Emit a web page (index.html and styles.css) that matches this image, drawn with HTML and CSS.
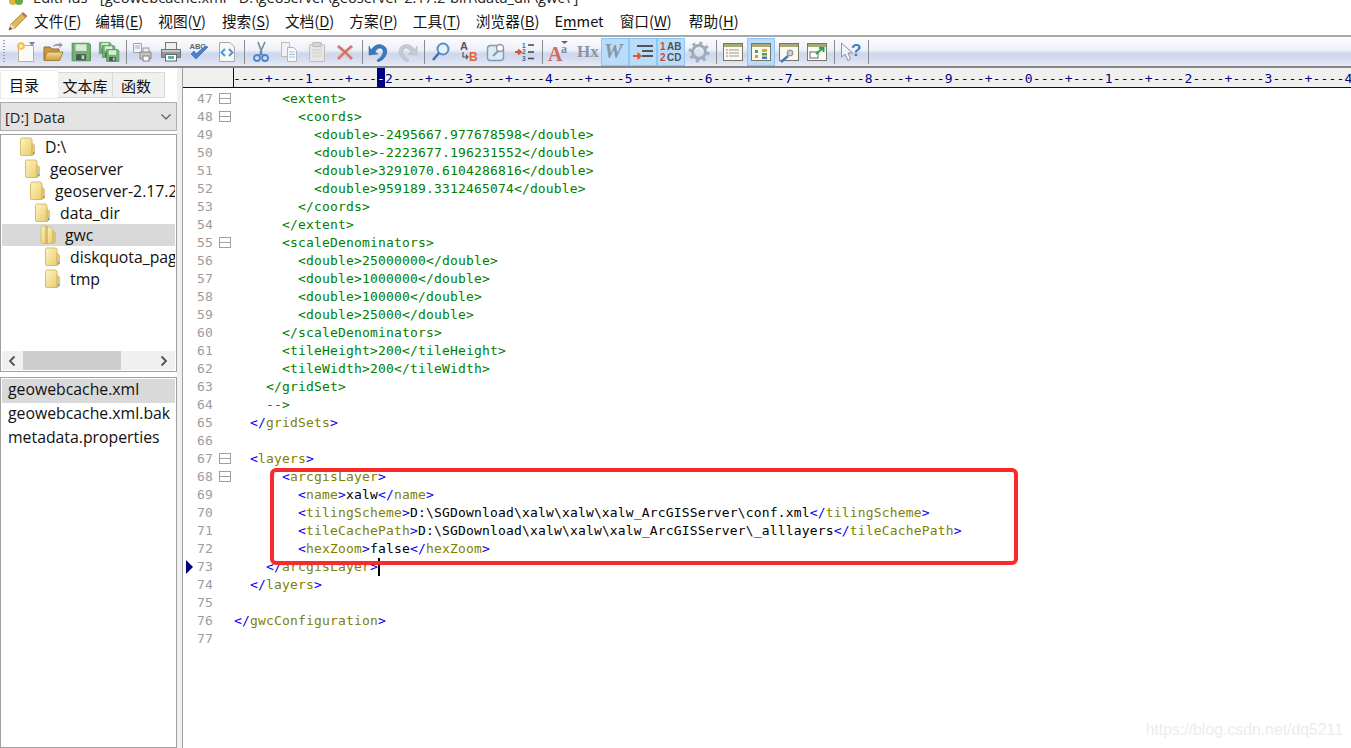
FILE: index.html
```html
<!DOCTYPE html>
<html lang="zh-CN">
<head>
<meta charset="utf-8">
<title>EditPlus</title>
<link rel="stylesheet" href="styles.css">
</head>
<body>
<svg class="defs" width="0" height="0" aria-hidden="true">
  <defs>
    <linearGradient id="fold" x1="0" y1="0" x2="1" y2="1">
      <stop offset="0" stop-color="#fdf5c4"/><stop offset="1" stop-color="#eacb6a"/>
    </linearGradient>
    <linearGradient id="gold" x1="0" y1="0" x2="0" y2="1">
      <stop offset="0" stop-color="#f6dc94"/><stop offset="1" stop-color="#cf9c3e"/>
    </linearGradient>
    <symbol id="folder" viewBox="0 0 17 20">
      <path d="M1.5 2.5Q1.5 1 3 1H11Q13 1 13 3V18.5H3Q1.5 18.5 1.5 17Z" fill="url(#fold)" stroke="#d8bb6d"/>
      <path d="M13 6L15.5 8V17L13 18.5Z" fill="#e4c878" stroke="#c9ab60" stroke-width=".6"/>
      <rect x="14" y="15" width="1.2" height="2" fill="#4aa4d8"/>
    </symbol>
    <symbol id="folder-open" viewBox="0 0 17 20">
      <path d="M1 2.5Q1 1 2.5 1H6V18.5H2.5Q1 18.5 1 17Z" fill="url(#fold)" stroke="#d8bb6d"/>
      <path d="M6 1L11 2.5Q13 3 13 5V18.5H6Z" fill="url(#fold)" stroke="#d8bb6d"/>
      <path d="M7 1V18.5" stroke="#b59a50"/>
      <path d="M13 6L15.5 8V17L13 18.5Z" fill="#e4c878" stroke="#c9ab60" stroke-width=".6"/>
    </symbol>
    <symbol id="floppy" viewBox="0 0 20 20">
      <path d="M2 2H17L18.500 3.500V18H2Z" fill="#6fb274" stroke="#5a9262"/>
      <rect x="5" y="3" width="10" height="6" fill="#dcead6"/>
      <rect x="5.500" y="12" width="9" height="5.500" fill="#4a584c"/>
      <rect x="10.500" y="13" width="2.500" height="3.500" fill="#c4cec4"/>
    </symbol>
    <symbol id="panel" viewBox="0 0 22 22">
      <rect x="1.500" y="2.500" width="19" height="17" fill="#fbfaf2" stroke="#77776a"/>
      <rect x="2" y="3" width="18" height="3" fill="#a9a878"/>
    </symbol>
  </defs>
</svg>

<div class="app">
  <div class="titlebar">
    <svg class="title-icon" viewBox="0 0 16 16" width="16" height="16"><circle cx="5" cy="6" r="4" fill="#d8b840"/><circle cx="11" cy="6" r="4" fill="#6aa84a"/></svg>
    <span class="title-text">EditPlus - [geowebcache.xml - D:\geoserver\geoserver-2.17.2-bin\data_dir\gwc\ ]</span>
  </div>

  <nav class="menubar">
    <svg class="pencil" viewBox="0 0 22 22" width="22" height="22">
      <path d="M2 20L4 14L16 2.500L20 6L8 18Z" fill="#e0b858" stroke="#96803e" stroke-width=".8"/>
      <path d="M16 2.500L20 6L18.500 7.500L14.500 4Z" fill="#cf6a5a"/>
      <path d="M2 20L4 14L8 18Z" fill="#f2dfb8"/>
      <path d="M2 20L3 17L5 19Z" fill="#333"/>
    </svg>
    <span class="menu m1">文件(<u>F</u>)</span>
    <span class="menu">编辑(<u>E</u>)</span>
    <span class="menu m3">视图(<u>V</u>)</span>
    <span class="menu">搜索(<u>S</u>)</span>
    <span class="menu">文档(<u>D</u>)</span>
    <span class="menu">方案(<u>P</u>)</span>
    <span class="menu">工具(<u>T</u>)</span>
    <span class="menu">浏览器(<u>B</u>)</span>
    <span class="menu m9">E<u>m</u>met</span>
    <span class="menu m10">窗口(<u>W</u>)</span>
    <span class="menu">帮助(<u>H</u>)</span>
  </nav>

  <div class="toolbar">
    <span class="grip"></span>
    <span class="tb"><svg viewBox="0 0 22 22">
      <path d="M4.500 4.500H19.500V20.500H4.500Z" fill="#fbfbf6" stroke="#b5b3a0"/>
      <path d="M15 1H21L18 5Z" fill="#7384a8"/>
      <circle cx="7" cy="5" r="3.800" fill="#f8b84a"/><circle cx="7" cy="5" r="2" fill="#ffeb9c"/>
    </svg></span>
    <span class="tb"><svg viewBox="0 0 22 22">
      <path d="M2 6H8L10 8H17V19H2Z" fill="#c89a45" stroke="#8d6c2e"/>
      <path d="M5 11H21L17.500 19.500H2Z" fill="url(#gold)" stroke="#a47f38"/>
      <path d="M10 6Q13 2 18 3L17 1L21 4L17 7L17.500 5Q14 4 10 6Z" fill="#8d9aa8"/>
    </svg></span>
    <span class="tb"><svg viewBox="0 0 20 20"><use href="#floppy"/></svg></span>
    <span class="tb"><svg viewBox="0 0 22 22">
      <use href="#floppy" x="0" y="0" width="14" height="14"/>
      <use href="#floppy" x="3" y="3" width="15" height="15"/>
      <use href="#floppy" x="7" y="7" width="15" height="15"/>
    </svg></span>
    <span class="sep"></span>
    <span class="tb"><svg viewBox="0 0 22 22">
      <path d="M1.500 2.500H9.500V11.500H1.500Z" fill="#f4f4f4" stroke="#a2a2a2"/>
      <path d="M3 5H8M3 7H8" stroke="#9ab0c8"/>
      <path d="M8 11H19V18H8Z" fill="#c4c4c4" stroke="#8a8a8a"/>
      <rect x="11" y="15" width="6" height="5" fill="#fff" stroke="#808080"/>
      <rect x="11" y="7" width="6" height="4" fill="#eee" stroke="#999"/>
    </svg></span>
    <span class="tb"><svg viewBox="0 0 22 22">
      <rect x="5.500" y="1.500" width="11" height="7" fill="#eee" stroke="#777"/>
      <path d="M1.500 8.500H20.500V16.500H1.500Z" fill="#8f959b" stroke="#6d7378"/>
      <rect x="2" y="9" width="18" height="2" fill="#c3c8cc"/>
      <rect x="5.500" y="13.500" width="11" height="6.500" fill="#fff" stroke="#666"/>
      <rect x="8" y="15" width="6" height="3" fill="#58b8a8"/>
    </svg></span>
    <span class="tb"><svg viewBox="0 0 22 22">
      <text x="1.500" y="8" class="abc">ABC</text>
      <path d="M3 13L8 18L20 6L17 5L8 13L6 10Z" fill="#4a80d0" stroke="#3562a0" stroke-width=".6"/>
    </svg></span>
    <span class="tb"><svg viewBox="0 0 22 22">
      <path d="M3.500 1.500H14L18.500 6V20.500H3.500Z" fill="#f8f8f4" stroke="#a8a89f"/>
      <path d="M9 8L5.500 11.500L9 15M13 8L16.500 11.500L13 15" fill="none" stroke="#4a98e4" stroke-width="2"/>
    </svg></span>
    <span class="sep"></span>
    <span class="tb"><svg viewBox="0 0 22 22">
      <path d="M8 1L12 12M15 1L10 12" stroke="#7a8898" stroke-width="1.600"/>
      <circle cx="7" cy="17" r="3" fill="none" stroke="#4a86cc" stroke-width="1.800"/>
      <circle cx="15" cy="17" r="3" fill="none" stroke="#4a86cc" stroke-width="1.800"/>
      <path d="M12 12L8.500 15M10 12L13.500 15" stroke="#4a86cc" stroke-width="1.600"/>
    </svg></span>
    <span class="tb"><svg viewBox="0 0 22 22">
      <path d="M3.500 1.500H11.500V15.500H3.500Z" fill="#f2f2f2" stroke="#bcbcbc"/>
      <path d="M9.500 6.500H15.500L18.500 9.500V20.500H9.500Z" fill="#f8f8f8" stroke="#b4b4b4"/>
      <path d="M11 11H17M11 13.500H17M11 16H17" stroke="#a2c2e2"/>
    </svg></span>
    <span class="tb"><svg viewBox="0 0 22 22">
      <rect x="3.500" y="3.500" width="15" height="17" rx="1" fill="#e6e6e6" stroke="#bcbcbc"/>
      <rect x="7" y="1.500" width="8" height="4" fill="#d8d8d8" stroke="#b8b8b8"/>
      <path d="M6 9H16M6 12H16M6 15H16" stroke="#d0d0d0"/>
    </svg></span>
    <span class="tb"><svg viewBox="0 0 22 22">
      <path d="M4 5L11 11L18 5M4 18L11 11L18 18" fill="none" stroke="#e0a8a4" stroke-width="3.600"/>
      <path d="M4 5L11 11L18 5M4 18L11 11L18 18" fill="none" stroke="#d06058" stroke-width="1.400"/>
    </svg></span>
    <span class="sep"></span>
    <span class="tb"><svg viewBox="0 0 22 22">
      <path d="M3 9Q8 2 14 4Q21 7 18 14Q16 19 10 21L9 19Q14 16 15 12Q16 8 12 7Q9 7 7 11L10 13L1 14L1 5L3 9Z" fill="#3a78bc" stroke="#2a5c98" stroke-width=".5"/>
    </svg></span>
    <span class="tb"><svg viewBox="0 0 22 22">
      <path d="M19 9Q14 2 8 4Q1 7 4 14Q6 19 12 21L13 19Q8 16 7 12Q6 8 10 7Q13 7 15 11L12 13L21 14L21 5L19 9Z" fill="#c5ccd0" stroke="#a9b2b8" stroke-width=".5"/>
    </svg></span>
    <span class="sep"></span>
    <span class="tb"><svg viewBox="0 0 22 22">
      <circle cx="13" cy="8" r="5.500" fill="#e4f0fa" stroke="#5a8cc4" stroke-width="2"/>
      <path d="M9 12L3 19" stroke="#3f74b0" stroke-width="2.600"/>
    </svg></span>
    <span class="tb"><svg viewBox="0 0 22 22">
      <text x="2" y="9" class="ab-a">A</text>
      <text x="11" y="20" class="ab-b">B</text>
      <path d="M5 11V16H9M8 14L10 16L8 18" fill="none" stroke="#555" stroke-width="1.200"/>
    </svg></span>
    <span class="tb"><svg viewBox="0 0 22 22">
      <rect x="1.500" y="4.500" width="16" height="15" rx="3" fill="#dce9f6" stroke="#7d9bbc" stroke-width="1.400"/>
      <circle cx="14" cy="7" r="3.500" fill="#fff" stroke="#8a98a6" stroke-width="1.400"/>
      <path d="M12 10L7 15" stroke="#8a98a6" stroke-width="2"/>
    </svg></span>
    <span class="tb"><svg viewBox="0 0 22 22">
      <path d="M1 11H6M4 8.500L7 11L4 13.500" fill="none" stroke="#d4552f" stroke-width="1.800"/>
      <text x="8" y="6.500" class="nums">1</text><text x="8" y="13" class="nums">2</text><text x="8" y="19.500" class="nums">3</text>
      <path d="M14 4H20M14 11H20M14 17.500H20" stroke="#444" stroke-width="1.600"/>
    </svg></span>
    <span class="sep"></span>
    <span class="tb"><svg viewBox="0 0 22 22">
      <text x="0" y="20" class="big-a">A</text>
      <text x="13" y="12" class="small-a">a</text>
      <path d="M13 0H20L16.500 3Z" fill="#5c6470"/>
    </svg></span>
    <span class="tb"><svg viewBox="0 0 22 22"><text x="1" y="16" class="hx">Hx</text></svg></span>
    <span class="tb on"><svg viewBox="0 0 22 22"><text x="0" y="17" class="w">W</text></svg></span>
    <span class="tb on"><svg viewBox="0 0 22 22">
      <path d="M5 5H21M10 10H21M10 15H21" stroke="#555" stroke-width="2"/>
      <path d="M1 15H8M5.500 12L8.500 15L5.500 18" fill="none" stroke="#e0562a" stroke-width="2"/>
    </svg></span>
    <span class="tb on"><svg viewBox="0 0 22 22">
      <text x="0" y="9" class="n-red">1</text><text x="7" y="9" class="n-grey">AB</text>
      <text x="0" y="20" class="n-red">2</text><text x="7" y="20" class="n-grey">CD</text>
    </svg></span>
    <span class="tb"><svg viewBox="0 0 22 22">
      <circle cx="11" cy="11" r="6.500" fill="none" stroke="#9badbc" stroke-width="3"/>
      <circle cx="11" cy="11" r="9" fill="none" stroke="#9badbc" stroke-width="3" stroke-dasharray="3 4.070"/>
      <circle cx="11" cy="11" r="3.500" fill="#dce4ea"/>
    </svg></span>
    <span class="sep"></span>
    <span class="tb"><svg viewBox="0 0 22 22">
      <use href="#panel" width="22" height="22"/>
      <path d="M7 9H17M7 12H17M7 15H17" stroke="#9a9a8c"/>
      <path d="M4 9H6M4 12H6M4 15H6" stroke="#d06a50"/>
    </svg></span>
    <span class="tb on"><svg viewBox="0 0 22 22">
      <use href="#panel" width="22" height="22"/>
      <rect x="5" y="9" width="3" height="3" fill="#55a040"/><rect x="5" y="14" width="3" height="3" fill="#d0a030"/>
      <rect x="12" y="8" width="5" height="3" fill="#d0b030"/><rect x="12" y="12" width="5" height="2.500" fill="#55a040"/><rect x="12" y="15.500" width="5" height="2.500" fill="#4878b0"/>
    </svg></span>
    <span class="tb"><svg viewBox="0 0 22 22">
      <use href="#panel" width="22" height="22"/>
      <circle cx="12" cy="12" r="3" fill="#c8ccd0" stroke="#888"/>
      <path d="M10 15L3 21" stroke="#3f7ac0" stroke-width="2.400"/>
    </svg></span>
    <span class="tb"><svg viewBox="0 0 22 22">
      <use href="#panel" width="22" height="22"/>
      <rect x="4" y="11" width="8" height="6" fill="#fff" stroke="#666"/>
      <path d="M10 13L17 7M13 7H17.500V11" fill="none" stroke="#2da04a" stroke-width="2"/>
    </svg></span>
    <span class="sep"></span>
    <span class="tb"><svg viewBox="0 0 22 22">
      <path d="M1.500 2V16L5 13L8 19.500L10.500 18L8 12H12.500Z" fill="#f2f4f8" stroke="#8a94a4"/>
      <text x="11" y="15" class="q">?</text>
    </svg></span>
    <span class="sep"></span>
  </div>

  <div class="main">
    <aside class="side">
      <div class="tabs">
        <span class="tab active">目录</span>
        <span class="tab t2">文本库</span>
        <span class="tab t3">函数</span>
      </div>
      <div class="drive"><span>[D:] Data</span>
        <svg viewBox="0 0 12 8" width="12" height="8"><path d="M1.500 1.500L6 6L10.500 1.500" fill="none" stroke="#555" stroke-width="1.100"/></svg>
      </div>
      <div class="tree">
        <ul class="tree-list">
          <li class="node d0"><svg class="fi"><use href="#folder"/></svg>D:\</li>
          <li class="node d1"><svg class="fi"><use href="#folder"/></svg>geoserver</li>
          <li class="node d2"><svg class="fi"><use href="#folder"/></svg>geoserver-2.17.2-bin</li>
          <li class="node d3"><svg class="fi"><use href="#folder"/></svg>data_dir</li>
          <li class="node d4 sel"><svg class="fi"><use href="#folder-open"/></svg>gwc</li>
          <li class="node d5"><svg class="fi"><use href="#folder"/></svg>diskquota_page_store</li>
          <li class="node d5"><svg class="fi"><use href="#folder"/></svg>tmp</li>
        </ul>
        <div class="hscroll">
          <svg viewBox="0 0 8 12" width="8" height="12"><path d="M6.500 1.500L2 6L6.500 10.500" fill="none" stroke="#505050" stroke-width="1.800"/></svg>
          <span class="track"><span class="thumb"></span></span>
          <svg viewBox="0 0 8 12" width="8" height="12"><path d="M1.500 1.500L6 6L1.500 10.500" fill="none" stroke="#505050" stroke-width="1.800"/></svg>
        </div>
      </div>
      <ul class="files">
        <li class="file sel">geowebcache.xml</li>
        <li class="file">geowebcache.xml.bak</li>
        <li class="file">metadata.properties</li>
      </ul>
    </aside>

    <section class="editor">
      <div class="ruler"><span class="ruler-gutter"></span><span class="ruler-text">----+----1----+---<b>-</b>2----+----3----+----4----+----5----+----6----+----7----+----8----+----9----+----0----+----1----+----2----+----3----+----4----</span></div>
      <div class="code">
        <div class="ln"><span class="no">47</span><span class="fold"></span><code class="c">      &lt;extent&gt;</code></div>
        <div class="ln"><span class="no">48</span><span class="fold"></span><code class="c">        &lt;coords&gt;</code></div>
        <div class="ln"><span class="no">49</span><span class="nf"></span><code class="c">          &lt;double&gt;-2495667.977678598&lt;/double&gt;</code></div>
        <div class="ln"><span class="no">50</span><span class="nf"></span><code class="c">          &lt;double&gt;-2223677.196231552&lt;/double&gt;</code></div>
        <div class="ln"><span class="no">51</span><span class="nf"></span><code class="c">          &lt;double&gt;3291070.6104286816&lt;/double&gt;</code></div>
        <div class="ln"><span class="no">52</span><span class="nf"></span><code class="c">          &lt;double&gt;959189.3312465074&lt;/double&gt;</code></div>
        <div class="ln"><span class="no">53</span><span class="nf"></span><code class="c">        &lt;/coords&gt;</code></div>
        <div class="ln"><span class="no">54</span><span class="nf"></span><code class="c">      &lt;/extent&gt;</code></div>
        <div class="ln"><span class="no">55</span><span class="fold"></span><code class="c">      &lt;scaleDenominators&gt;</code></div>
        <div class="ln"><span class="no">56</span><span class="nf"></span><code class="c">        &lt;double&gt;25000000&lt;/double&gt;</code></div>
        <div class="ln"><span class="no">57</span><span class="nf"></span><code class="c">        &lt;double&gt;1000000&lt;/double&gt;</code></div>
        <div class="ln"><span class="no">58</span><span class="nf"></span><code class="c">        &lt;double&gt;100000&lt;/double&gt;</code></div>
        <div class="ln"><span class="no">59</span><span class="nf"></span><code class="c">        &lt;double&gt;25000&lt;/double&gt;</code></div>
        <div class="ln"><span class="no">60</span><span class="nf"></span><code class="c">      &lt;/scaleDenominators&gt;</code></div>
        <div class="ln"><span class="no">61</span><span class="nf"></span><code class="c">      &lt;tileHeight&gt;200&lt;/tileHeight&gt;</code></div>
        <div class="ln"><span class="no">62</span><span class="nf"></span><code class="c">      &lt;tileWidth&gt;200&lt;/tileWidth&gt;</code></div>
        <div class="ln"><span class="no">63</span><span class="nf"></span><code class="c">    &lt;/gridSet&gt;</code></div>
        <div class="ln"><span class="no">64</span><span class="nf"></span><code class="c">    --&gt;</code></div>
        <div class="ln"><span class="no">65</span><span class="nf"></span><code>  <i>&lt;/</i><em>gridSets</em><i>&gt;</i></code></div>
        <div class="ln"><span class="no">66</span><span class="nf"></span><code></code></div>
        <div class="ln"><span class="no">67</span><span class="fold"></span><code>  <i>&lt;</i><em>layers</em><i>&gt;</i></code></div>
        <div class="ln"><span class="no">68</span><span class="fold"></span><code>      <i>&lt;</i><em>arcgisLayer</em><i>&gt;</i></code></div>
        <div class="ln"><span class="no">69</span><span class="nf"></span><code>        <i>&lt;</i><em>name</em><i>&gt;</i>xalw<i>&lt;/</i><em>name</em><i>&gt;</i></code></div>
        <div class="ln"><span class="no">70</span><span class="nf"></span><code>        <i>&lt;</i><em>tilingScheme</em><i>&gt;</i>D:\SGDownload\xalw\xalw\xalw_ArcGISServer\conf.xml<i>&lt;/</i><em>tilingScheme</em><i>&gt;</i></code></div>
        <div class="ln"><span class="no">71</span><span class="nf"></span><code>        <i>&lt;</i><em>tileCachePath</em><i>&gt;</i>D:\SGDownload\xalw\xalw\xalw_ArcGISServer\_alllayers<i>&lt;/</i><em>tileCachePath</em><i>&gt;</i></code></div>
        <div class="ln"><span class="no">72</span><span class="nf"></span><code>        <i>&lt;</i><em>hexZoom</em><i>&gt;</i>false<i>&lt;/</i><em>hexZoom</em><i>&gt;</i></code></div>
        <div class="ln cur"><span class="no">73</span><span class="nf"></span><code>    <i>&lt;/</i><em>arcgisLayer</em><i>&gt;</i><span class="caret"></span></code></div>
        <div class="ln"><span class="no">74</span><span class="nf"></span><code>  <i>&lt;/</i><em>layers</em><i>&gt;</i></code></div>
        <div class="ln"><span class="no">75</span><span class="nf"></span><code></code></div>
        <div class="ln"><span class="no">76</span><span class="nf"></span><code><i>&lt;/</i><em>gwcConfiguration</em><i>&gt;</i></code></div>
        <div class="ln"><span class="no">77</span><span class="nf"></span><code></code></div>
      </div>
    </section>
  </div>

  <div class="redbox"></div>
  <div class="watermark">https://blog.csdn.net/dq5211</div>
</div>
</body>
</html>
```
FILE: styles.css
```css
* { box-sizing: border-box; }
html, body { margin: 0; padding: 0; height: 100%; background: #fff; overflow: hidden; }
.defs { position: absolute; }
.app {
  position: relative; width: 1351px; height: 748px; overflow: hidden;
  display: flex; flex-direction: column;
  font-family: "Open Sans", "Noto Sans CJK SC", sans-serif; color: #000;
}

/* Title bar (cropped by the screenshot edge) */
.titlebar { height: 7px; flex: none; display: flex; gap: 9px; padding-left: 8px; overflow: hidden; align-items: flex-end; background: #fff; }
.title-icon { flex: none; margin-bottom: -4px; }
.title-text { font: 14.67px/20px "Open Sans", "Noto Sans CJK SC", sans-serif; white-space: nowrap; color: #222; }

/* Menu */
.menubar { height: 28px; flex: none; display: flex; align-items: center; background: #fff; padding-left: 7px; font-family: "Noto Sans CJK SC", sans-serif; font-size: 14.67px; color: #111; }
.pencil { flex: none; margin-right: 5px; }
.menu { white-space: nowrap; margin-right: 15px; line-height: 20px; }
.menu u { text-underline-offset: 2px; }
.m1 { margin-right: 14px; }
.m3 { margin-right: 16px; }
.m9 { margin-right: 16px; }
.m10 { margin-right: 17px; }

/* Toolbar */
.toolbar {
  height: 33px; flex: none; display: flex; align-items: center; padding-left: 3px;
  border-top: 2px solid #a8a8a8; border-bottom: 2px solid #858585;
  background: linear-gradient(#fdfdfe 0, #eef0f8 45%, #cdd6ec 58%, #d9dff0 80%, #e6e9f5 100%);
}
.grip { width: 2px; height: 24px; margin-right: 6px; background: repeating-linear-gradient(#9aa0a8 0 1px, transparent 1px 3px); }
.tb { width: 28px; height: 28px; flex: none; display: flex; align-items: center; justify-content: center; border: 1px solid transparent; }
.tb svg { width: 22px; height: 22px; display: block; overflow: visible; }
.tb.on { background: #b9dcfa; border-color: #8cc6fb; }
.sep { width: 6px; flex: none; height: 24px; background: linear-gradient(#8a8a8a, #8a8a8a) center / 1px 100% no-repeat; }

/* Icon text */
.abc { font: 700 7.500px "Liberation Sans", sans-serif; fill: #666; }
.ab-a { font: 700 11px "Liberation Sans", sans-serif; fill: #555; }
.ab-b { font: 700 12px "Liberation Sans", sans-serif; fill: #e0653f; }
.nums { font: 700 6.500px "Liberation Sans", sans-serif; fill: #3a68a8; }
.big-a { font: 700 20px "Liberation Serif", serif; fill: #d06a5e; }
.small-a { font: 700 12px "Liberation Serif", serif; fill: #7a88a0; }
.hx { font: 700 17px "Liberation Serif", serif; fill: #8a94a2; }
.w { font: italic 700 21px "Liberation Serif", serif; fill: #8894a2; }
.n-red { font: 700 10px "Liberation Sans", sans-serif; fill: #c8502e; }
.n-grey { font: 700 10px "Liberation Sans", sans-serif; fill: #555; }
.q { font: 700 17px "Liberation Sans", sans-serif; fill: #4a7ab8; }

/* Main */
.main { flex: 1; min-height: 0; display: flex; }
.side { width: 177px; flex: none; display: flex; flex-direction: column; background: #fff; margin-right: 5px; box-shadow: 5px 0 0 #f0f0f0; }

.tabs { height: 35px; flex: none; display: flex; align-items: flex-start; padding: 3px 0 0 1px; font-family: "Noto Sans CJK SC", sans-serif; font-size: 15px; }
.tab { height: 26px; display: flex; align-items: center; justify-content: center; background: #f0f0f0; border: 1px solid #d9d9d9; border-left: 0; margin-top: 1px; color: #111; }
.tab.active { width: 57px; height: 27px; margin-top: 0; background: #fff; border: 0; box-shadow: 0 0 0 1px #ececec; justify-content: flex-start; padding-left: 8px; }
.t2 { width: 55px; }
.t3 { width: 52px; padding-right: 5px; }

.drive { height: 29px; flex: none; display: flex; justify-content: space-between; align-items: center; padding: 0 4px; background: #e3e3e3; border: 1px solid #adadad; font-size: 14.67px; color: #222; margin-top: -1px; }
.tree { height: 238px; flex: none; margin-top: 3px; border: 1px solid #a0a0a0; padding: 1px; display: flex; flex-direction: column; background: #fff; }
.tree-list { list-style: none; margin: 0; padding: 0; flex: 1; min-height: 0; overflow: hidden; }
.node { height: 22px; display: flex; align-items: center; font-size: 15.8px; line-height: 21px; white-space: nowrap; overflow: hidden; color: #111; }
.fi { width: 17px; height: 20px; flex: none; margin-right: 9px; }
.d0 { padding-left: 17px; }
.d1 { padding-left: 22px; }
.d2 { padding-left: 27px; }
.d3 { padding-left: 32px; }
.d4 { padding-left: 38px; }
.d4 .fi { margin-right: 8px; }
.d5 { padding-left: 42px; }
.node.sel, .file.sel { background: #d9d9d9; }
.hscroll { height: 19px; flex: none; display: flex; align-items: center; justify-content: space-between; background: #f0f0f0; padding: 0 7px 0 6px; }
.track { flex: 1; height: 100%; margin: 0 3px; padding-left: 4px; display: flex; }
.thumb { width: 98px; background: #cdcdcd; }

.files { list-style: none; flex: 1; min-height: 0; margin: 5px 0 0; padding: 1px; border: 1px solid #a0a0a0; }
.file { height: 24px; padding-left: 6px; font-size: 15.8px; line-height: 21px; white-space: nowrap; overflow: hidden; color: #111; }

/* Editor */
.editor { flex: 1; min-width: 0; display: flex; flex-direction: column; background: #fff; border-left: 1px solid #a0a0a0; }
.ruler { height: 20px; flex: none; display: flex; background: #f0f0f0; border-bottom: 1px solid #111; overflow: hidden; }
.ruler-gutter { width: 50px; flex: none; }
.ruler-text { font: 13px/21px "DejaVu Sans Mono", monospace; letter-spacing: .17px; color: #00007f; white-space: pre; box-shadow: inset 1px 0 0 #00007f; }
.ruler-text b { font-weight: 400; background: #00007f; color: #fff; display: inline-block; height: 19px; }
.code { flex: 1; min-height: 0; padding-top: 2px; overflow: hidden; }
.ln { height: 18px; display: flex; position: relative; font: 13px/18px "DejaVu Sans Mono", monospace; letter-spacing: .17px; }
.no { width: 30px; flex: none; text-align: right; color: #9c9c9c; }
.fold { width: 12px; height: 11px; flex: none; margin: 3px 3px 0 6px; border: 1px solid #9f9f9f; background: linear-gradient(#9f9f9f, #9f9f9f) center / 100% 1px no-repeat; }
.nf { width: 21px; flex: none; }
.ln code { font: inherit; letter-spacing: inherit; white-space: pre; color: #000; }
.ln code.c { color: #008000; }
.ln i { font-style: normal; color: #0000ff; }
.ln em { font-style: normal; color: #808000; }
.cur::before {
  content: ""; position: absolute; left: 3px; top: 2px;
  border-left: 7px solid #00007f; border-top: 7px solid transparent; border-bottom: 7px solid transparent;
}
.caret { display: inline-block; width: 2px; height: 18px; background: #000; vertical-align: top; }

/* Overlays */
.redbox { position: absolute; left: 270px; top: 468px; width: 748px; height: 97px; border: 4px solid #fb2a2a; border-radius: 6px; }
.watermark { position: absolute; right: 8px; top: 720px; font: 15.8px/20px "Liberation Sans", sans-serif; color: #ececec; }
```
